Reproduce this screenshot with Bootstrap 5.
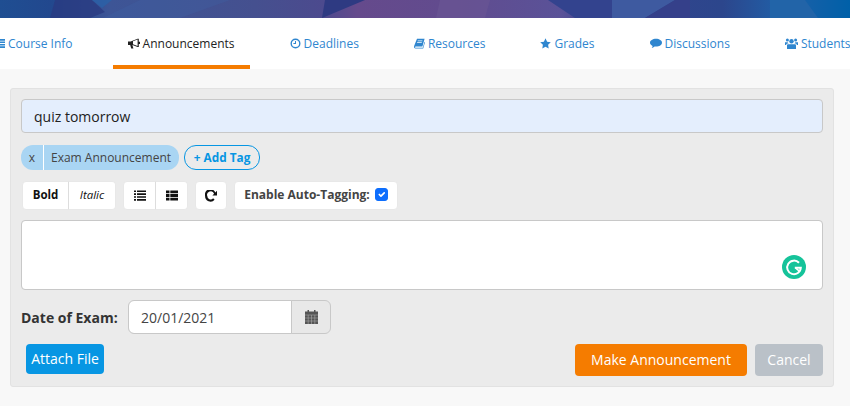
<!DOCTYPE html>
<html lang="en">
<head>
    <meta charset="UTF-8">
    <title>Announcements</title>
    <link href="https://cdn.jsdelivr.net/npm/bootstrap@5.3.0/dist/css/bootstrap.min.css" rel="stylesheet">
    <style>
        body {
            font-family: "Open Sans", "Liberation Sans", sans-serif;
            background-color: #f8f8f8;
            overflow: hidden;
            color: #333;
        }
        .top-banner {
            height: 18px;
            overflow: hidden;
            background: linear-gradient(90deg, #1f4e92 0%, #22488e 6%, #3d5596 13%, #45508f 30%, #4c4a8e 38%, #654a8c 42%, #624b8e 52%, #5a5298 66%, #35448e 71%, #2c468c 85%, #2060a8 92%, #0060a8 100%);
        }
        .top-banner svg { display: block; }
        .tab-bar {
            height: 51px;
            background-color: #fff;
            overflow: hidden;
        }
        .tab-list {
            margin-left: -21px;
            gap: 25px;
            white-space: nowrap;
        }
        .tab-link {
            display: flex;
            align-items: center;
            gap: 3px;
            height: 51px;
            padding: 4px 15px 0;
            font-size: 12px;
            color: #2f86cf;
            text-decoration: none;
            border-bottom: 4px solid transparent;
        }
        .tab-link.is-active {
            color: #222;
            border-bottom-color: #f57c00;
        }
        .tab-link svg { fill: currentColor; flex: none; }
        .compose-panel {
            margin: 19px 16px 0 10px;
            padding: 10px;
            background-color: #ebebeb;
            border: 1px solid #e2e2e2;
            border-radius: 3px;
        }
        .title-input.form-control {
            height: 34px;
            padding: 0 12px;
            font-size: 14px;
            color: #222;
            background-color: #e4eefd;
            border-color: #c8c8c8;
            border-radius: 4px;
        }
        .tag-row { margin-top: 12px; gap: 5px; }
        .tag-pill {
            display: flex;
            height: 25px;
            line-height: 25px;
            font-size: 12px;
            color: #444;
            background-color: #a9d5f3;
            border-radius: 12px;
        }
        .tag-close {
            width: 23px;
            text-align: center;
            border-right: 1px solid #fff;
        }
        .tag-name { padding: 0 8px 0 7px; }
        .add-tag.btn {
            width: 76px;
            height: 25px;
            padding: 0;
            font-size: 11.8px;
            font-weight: 700;
            line-height: 23px;
            color: #0796e3;
            border: 1px solid #0796e3;
            border-radius: 12px;
        }
        .tool-row { margin: 11px 0 0 1px; gap: 7px; }
        .tool-btn.btn {
            height: 29px;
            padding: 0 0 2px;
            font-size: 11.5px;
            line-height: 25px;
            color: #111;
            background-color: #fff;
            border: 1px solid #e8e8e8;
            border-radius: 4px;
        }
        .tool-group .tool-btn + .tool-btn { border-left: 1px solid #ddd; }
        .tool-w-bold { width: 47px; font-weight: 700; }
        .tool-w-italic { width: 48px; font-style: italic; }
        .tool-w-icon { width: 33px; }
        .tool-w-one { width: 32px; }
        .auto-tag {
            width: 164px;
            height: 29px;
            padding-bottom: 2px;
            font-size: 12px;
            font-weight: 700;
            color: #444;
            background-color: #fff;
            border: 1px solid #e8e8e8;
            border-radius: 4px;
        }
        .auto-tag .form-check-input {
            width: 13px;
            height: 13px;
            margin: 0 0 0 5px;
            background-color: #0d6efd;
            border-color: #0d6efd;
        }
        .body-wrap { height: 70px; margin-top: 10px; }
        .body-input.form-control {
            height: 70px;
            resize: none;
            border-color: #c8c8c8;
            border-radius: 4px;
        }
        .grammarly-dot {
            position: absolute;
            right: 17px;
            bottom: 11px;
            width: 24px;
            height: 24px;
        }
        .date-row { margin-top: 10px; }
        .date-label {
            width: 107px;
            font-size: 14px;
            font-weight: 700;
            color: #333;
        }
        .date-group { width: 203px; }
        .date-group .form-control {
            height: 34px;
            padding: 0 12px;
            font-size: 14px;
            color: #444;
            border-color: #c8c8c8;
        }
        .date-group .input-group-text {
            width: 40px;
            padding: 0;
            justify-content: center;
            background-color: #e8e8e8;
            border-color: #c8c8c8;
        }
        .action-row { margin-top: 10px; }
        .action-btn.btn {
            font-size: 14px;
            color: #fff;
            border: 0;
            border-radius: 4px;
            padding: 0 0 2px;
        }
        .attach-btn.btn { width: 78px; height: 30px; margin-left: 5px; background-color: #0796e3; }
        .make-btn.btn { width: 172px; height: 32px; background-color: #f57c00; }
        .cancel-btn.btn { width: 68px; height: 32px; background-color: #bac1c8; }
    </style>
</head>
<body>

<div class="top-banner">
    <svg width="850" height="18" viewBox="0 0 850 18">
        <polygon points="55,0 92,0 105,12 90,18 50,18" fill="#2a3a80" opacity=".75"/>
        <polygon points="92,0 112,0 102,8" fill="#2a62a8" opacity=".8"/>
        <polygon points="103,18 140,0 230,0 180,18" fill="#3f62a4" opacity=".3"/>
        <polygon points="322,18 325,0 365,0" fill="#2e3a82"/>
        <polygon points="436,18 440,0 490,0 485,18" fill="#6a5694" opacity=".6"/>
        <polygon points="575,18 548,0 612,0 612,18" fill="#33438e"/>
        <polygon points="612,18 612,0 675,0 645,18" fill="#3e5aa0"/>
        <polygon points="645,18 675,0 690,0 690,18" fill="#35408a"/>
        <polygon points="770,18 770,0 805,0 818,18" fill="#2264a8"/>
    </svg>
</div>

<nav class="tab-bar">
    <div class="tab-list d-flex">
        <a class="tab-link" href="#">
            <svg width="11" height="11" viewBox="0 0 11 11"><path d="M0 1h11v1.700H0zM0 3.400h11v1.700H0zM0 5.900h11v1.700H0zM0 8.300h11V10H0z"/></svg>
            Course Info</a>
        <a class="tab-link is-active" href="#">
            <svg width="12" height="11" viewBox="0 0 12 11"><path d="M0 3.600h2.600l7-2.900h1.200v3h1.200v2.200h-1.200v3H9.600L4.400 7.100 5.400 10.600H3.200L2.200 7.100H0z M5 3.300v3l4.600 1.700V1.600z" fill-rule="evenodd"/></svg>
            Announcements</a>
        <a class="tab-link" href="#">
            <svg width="11" height="11" viewBox="0 0 11 11"><path d="M5.500.5a5 5 0 1 1 0 10 5 5 0 0 1 0-10zm0 1.400a3.600 3.600 0 1 0 0 7.200 3.600 3.600 0 0 0 0-7.200zM5 3h1v3H3.400V5H5z" fill-rule="evenodd"/></svg>
            Deadlines</a>
        <a class="tab-link" href="#">
            <svg width="11" height="11" viewBox="0 0 11 11"><path d="M3 .8h7.600L8.400 8.600H1.600c-.7 0-.7 1.200 0 1.200h7.200l1.700-6 .5.400-1.800 6.300H1.400C.2 10.500-.3 9.200.3 7.500zM3.800 2.500l-.2.800h4.700l.2-.8zM3.200 4.300l-.2.800h4.700l.2-.8z" fill-rule="evenodd"/></svg>
            Resources</a>
        <a class="tab-link" href="#">
            <svg width="11" height="11" viewBox="0 0 11 11"><path d="M5.500.3l1.600 3.400 3.700.5-2.700 2.600.6 3.700-3.200-1.800-3.200 1.800.6-3.700L.2 4.200l3.700-.5z"/></svg>
            Grades</a>
        <a class="tab-link" href="#">
            <svg width="12" height="11" viewBox="0 0 12 11"><path d="M6 .8c3.300 0 6 1.700 6 3.900S9.300 8.600 6 8.600c-.5 0-1 0-1.400-.1-.8.8-2 1.300-3.100 1.500.6-.6 1-1.300 1.100-2.100C1 7.200 0 6 0 4.700 0 2.500 2.700.8 6 .8z"/></svg>
            Discussions</a>
        <a class="tab-link" href="#">
            <svg width="13" height="11" viewBox="0 0 13 11"><circle cx="6.500" cy="3.200" r="2.200"/><circle cx="2.400" cy="2" r="1.500"/><circle cx="10.600" cy="2" r="1.500"/><path d="M3.200 6.200h6.600c.7 0 1.200.5 1.200 1.200V11H2V7.400c0-.7.500-1.200 1.200-1.200zM0 4.200h2.600c.3.600.7 1 1 1.200H2.400C1.600 5.500 1.300 6 1.200 7H0zM13 4.200h-2.600c-.3.600-.7 1-1 1.200h1.200c.8.100 1.100.6 1.200 1.600H13z"/></svg>
            Students</a>
    </div>
</nav>

<div class="compose-panel">
    <input class="title-input form-control shadow-none" type="text" value="quiz tomorrow">

    <div class="tag-row d-flex align-items-center">
        <div class="tag-pill">
            <span class="tag-close">x</span>
            <span class="tag-name">Exam Announcement</span>
        </div>
        <button type="button" class="add-tag btn">+ Add Tag</button>
    </div>

    <div class="tool-row d-flex">
        <div class="btn-group tool-group">
            <button type="button" class="tool-btn tool-w-bold btn">Bold</button>
            <button type="button" class="tool-btn tool-w-italic btn">Italic</button>
        </div>
        <div class="btn-group tool-group">
            <button type="button" class="tool-btn tool-w-icon btn">
                <svg width="12" height="11" viewBox="0 0 12 11" fill="#111"><path d="M0 .4h2v1.600H0zM3 .4h9v1.600H3zM0 3.300h2v1.600H0zM3 3.300h9v1.600H3zM0 6.200h2v1.600H0zM3 6.200h9v1.600H3zM0 9.100h2v1.600H0zM3 9.100h9v1.600H3z"/></svg>
            </button>
            <button type="button" class="tool-btn tool-w-icon btn">
                <svg width="12" height="11" viewBox="0 0 12 11" fill="#111"><path d="M0 .5h3.500v2.800H0zM4.300.5H12v2.800H4.300zM0 4.100h3.500v2.800H0zM4.300 4.100H12v2.800H4.300zM0 7.700h3.500v2.800H0zM4.300 7.700H12v2.800H4.300z"/></svg>
            </button>
        </div>
        <button type="button" class="tool-btn tool-w-one btn">
            <svg width="12" height="12" viewBox="0 0 12 12" fill="#111"><path d="M12 .8v4.600H7.400l1.700-1.700A3.300 3.300 0 0 0 2.300 6a3.300 3.300 0 0 0 5.800 2.200l1.500 1.500A5.400 5.400 0 0 1 .1 6 5.400 5.400 0 0 1 10.300 2.500z"/></svg>
        </button>
        <label class="auto-tag d-flex align-items-center justify-content-center m-0">
            Enable Auto-Tagging:
            <input class="form-check-input shadow-none" type="checkbox" checked>
        </label>
    </div>

    <div class="body-wrap position-relative">
        <textarea class="body-input form-control shadow-none"></textarea>
        <svg class="grammarly-dot" viewBox="0 0 24 24">
            <circle cx="12" cy="12" r="12" fill="#15c39a"/>
            <path d="M17 7.800A6.800 6.800 0 1 0 18.800 12.800h-6" fill="none" stroke="#fff" stroke-width="2"/>
            <path d="M13.500 12.800l3.800 3.400" fill="none" stroke="#fff" stroke-width="1.600"/>
        </svg>
    </div>

    <div class="date-row d-flex align-items-center">
        <label class="date-label m-0">Date of Exam:</label>
        <div class="input-group date-group flex-nowrap">
            <input class="form-control shadow-none" type="text" value="20/01/2021">
            <span class="input-group-text">
                <svg width="13" height="14" viewBox="0 0 13 14"><path d="M2.500 0h1.500v1.500h5V0h1.500v1.500H13V14H0V1.500h2.500z" fill="#555"/><path d="M0 5h13M0 8h13M0 11h13M3.200 5v9M6.500 5v9M9.800 5v9" stroke="#a8a8a8" stroke-width=".6" fill="none"/></svg>
            </span>
        </div>
    </div>

    <div class="action-row d-flex justify-content-between align-items-start">
        <button type="button" class="action-btn attach-btn btn">Attach File</button>
        <div class="d-flex gap-2">
            <button type="button" class="action-btn make-btn btn">Make Announcement</button>
            <button type="button" class="action-btn cancel-btn btn">Cancel</button>
        </div>
    </div>
</div>

<script src="https://cdn.jsdelivr.net/npm/bootstrap@5.3.0/dist/js/bootstrap.bundle.min.js"></script>
</body>
</html>
